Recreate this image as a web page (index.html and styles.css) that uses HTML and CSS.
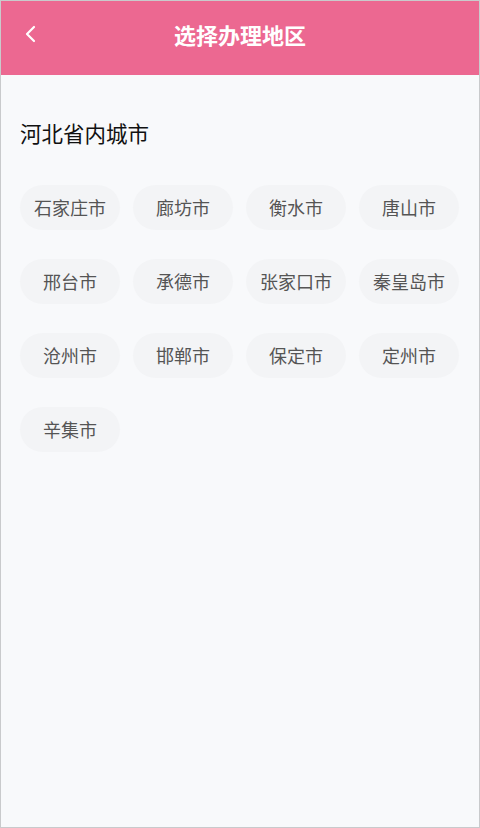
FILE: index.html
```html
<!DOCTYPE html>
<html lang="zh">
<head>
<meta charset="utf-8">
<link rel="stylesheet" href="styles.css">
</head>
<body>
<div class="frame">
  <header class="topbar">
    <span class="back">
      <svg width="14" height="20" viewBox="0 0 14 20"><path d="M10 3 L3 10 L10 17" fill="none" stroke="#fff" stroke-width="2.2" stroke-linecap="round" stroke-linejoin="round"/></svg>
    </span>
    <h1 class="title">选择办理地区</h1>
  </header>
  <main class="content">
    <h2 class="section">河北省内城市</h2>
    <div class="grid">
      <div class="chip">石家庄市</div>
      <div class="chip">廊坊市</div>
      <div class="chip">衡水市</div>
      <div class="chip">唐山市</div>
      <div class="chip">邢台市</div>
      <div class="chip">承德市</div>
      <div class="chip">张家口市</div>
      <div class="chip">秦皇岛市</div>
      <div class="chip">沧州市</div>
      <div class="chip">邯郸市</div>
      <div class="chip">保定市</div>
      <div class="chip">定州市</div>
      <div class="chip">辛集市</div>
    </div>
  </main>
</div>
</body>
</html>
```
FILE: styles.css
```css
* { box-sizing: border-box; }
html, body { margin: 0; padding: 0; }
body {
  font-family: "Noto Sans CJK SC", "Noto Sans", sans-serif;
  background: #fff;
}
.frame {
  width: 480px;
  height: 828px;
  border: 1px solid #c9cacc;
  background: #f8f9fb;
  overflow: hidden;
}
.topbar {
  position: relative;
  height: 74px;
  background: #ec6891;
  display: flex;
  justify-content: center;
  padding-top: 19px;
}
.back {
  position: absolute;
  left: 23px;
  top: 23px;
  width: 14px;
  height: 20px;
  display: flex;
}
.title {
  margin: 0;
  color: #fff;
  font-size: 22px;
  font-weight: 700;
  line-height: 28px;
}
.content {
  padding: 44px 0 0 19px;
}
.section {
  margin: 0;
  font-size: 21.5px;
  font-weight: 400;
  line-height: 28px;
  color: #111;
}
.grid {
  margin-top: 38px;
  display: grid;
  grid-template-columns: repeat(4, 100px);
  column-gap: 13px;
  row-gap: 29px;
}
.chip {
  height: 45px;
  border-radius: 23px;
  background: #f3f4f6;
  color: #555;
  font-size: 18px;
  display: flex;
  align-items: center;
  justify-content: center;
  padding-bottom: 1px;
}
```
